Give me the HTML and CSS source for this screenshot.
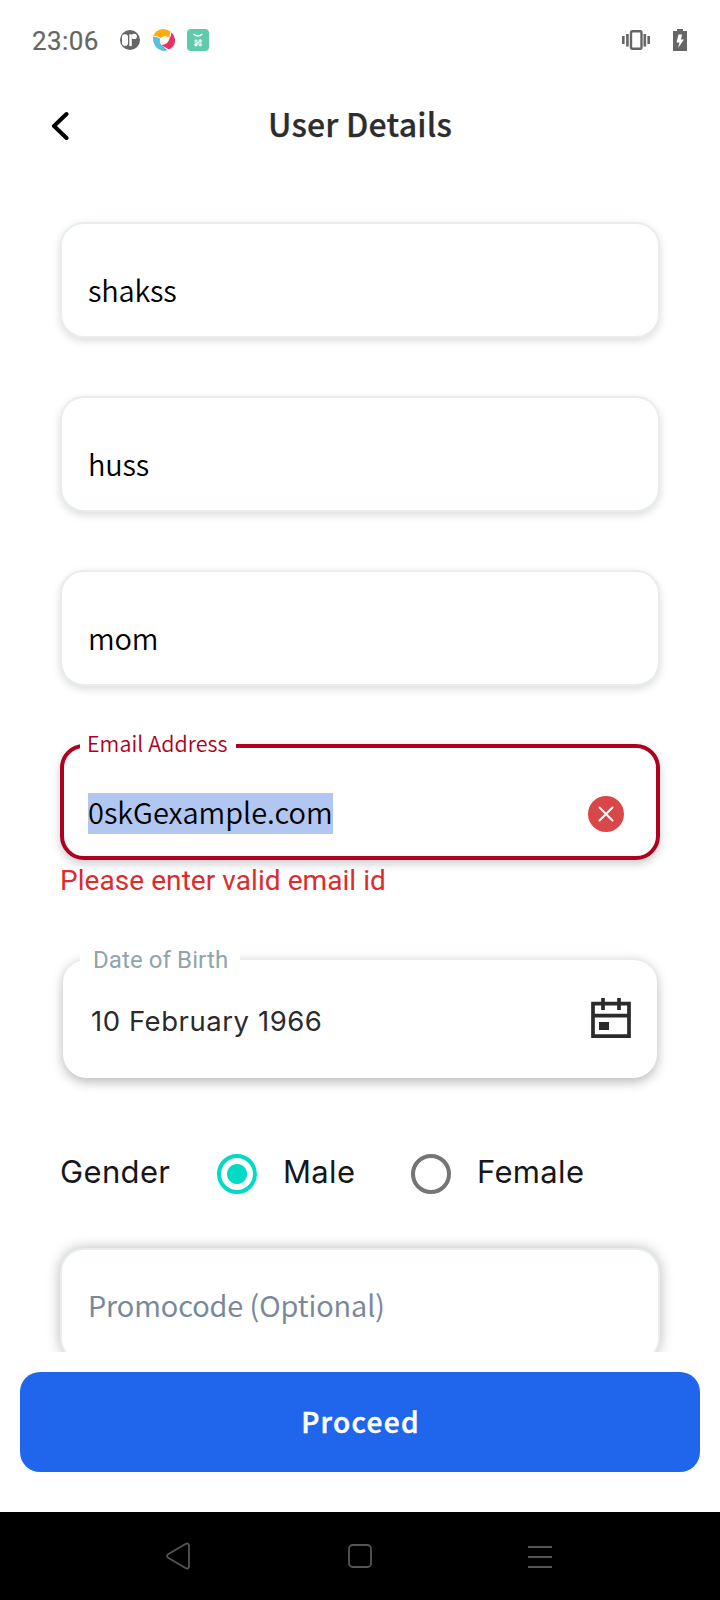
FILE: index.html
```html
<!DOCTYPE html>
<html lang="en">
<head>
<meta charset="utf-8">
<title>User Details</title>
<link rel="stylesheet" href="styles.css">
</head>
<body>
<div class="screen">
  <div class="status">
    <span class="clock">23:06</span>
    <svg class="ico-p" width="20" height="20" viewBox="0 0 20 20"><circle cx="10" cy="10" r="10" fill="#666"/><rect x="2" y="4.300" width="6" height="11.400" rx="2.800" fill="#fff"/><path d="M9.300 4.300h2.500v11.800H9.300z" fill="#fff"/><circle cx="14.200" cy="6.400" r="2.700" fill="#fff"/></svg>
    <svg class="ico-swirl" width="22" height="22" viewBox="0 0 22 22"><path d="M.2 6.800Q3.500 0 10.500 0q4 0 7 2.500l-1.200 6.200Q12.500 5 7.500 9.300 5 6.500.2 6.800z" fill="#fdae0c"/><path d="M18.300 3.300Q22.500 7 22 12.500q-.8 5.500-6 8L8 16q7 .2 8.500-6.500 2-3 1.800-6.200z" fill="#e92f63"/><path d="M0 7.800q4-.8 7.200 2.200-1.500 5 3.600 7.700l3.700 3.800Q8 23 3.500 18.500-.4 14.500 0 7.800z" fill="#5bc0dc"/></svg>
    <svg class="ico-bag" width="22" height="22" viewBox="0 0 22 22"><rect width="22" height="22" rx="4" fill="#5fcbaa"/><path d="M6.500 5q4.500 4 9 0" fill="none" stroke="#fff" stroke-width="1.400"/><g fill="#fff"><circle cx="9" cy="12" r="1.700" opacity=".7"/><circle cx="13.200" cy="12" r="1.700"/><circle cx="9" cy="15.700" r="1.700"/><circle cx="13.200" cy="15.700" r="1.700" opacity=".8"/><circle cx="11" cy="13.800" r="1"/></g></svg>
    <span class="spacer"></span>
    <svg class="ico-vib" width="28" height="20" viewBox="0 0 28 20" fill="#666"><rect x="9" y="1.200" width="10.500" height="17.600" rx="1.500" fill="none" stroke="#666" stroke-width="2.400"/><rect y="6" width="2.600" height="8"/><rect x="4.100" y="4" width="2.600" height="12.500"/><rect x="21.500" y="4" width="2.600" height="12.500"/><rect x="25.400" y="6" width="2.600" height="8"/></svg>
    <svg class="ico-bat" width="14" height="22" viewBox="0 0 14 22"><path d="M4 0h6v2h4v20H0V2h4z" fill="#666"/><path d="M9 5.500H5.500L3.500 13.500h3L5 19l6-8.500H8z" fill="#fff"/></svg>
  </div>

  <div class="header">
    <svg class="back" width="18" height="30" viewBox="0 0 18 30"><path d="M15.500 3L3 15l12.500 12" fill="none" stroke="#000" stroke-width="4" stroke-linecap="round" stroke-linejoin="round"/></svg>
    <h1 class="title">User Details</h1>
  </div>

  <div class="form">
    <div class="field"><span class="value name">shakss</span></div>
    <div class="field"><span class="value name">huss</span></div>
    <div class="field"><span class="value name">mom</span></div>
    <div class="field error">
      <span class="label">Email Address</span>
      <span class="value selected">0skGexample.com</span>
      <svg class="clear" width="36" height="36" viewBox="0 0 36 36"><circle cx="18" cy="18" r="18" fill="#d94848"/><path d="M11.500 11.500l13 13m0-13l-13 13" stroke="#fff" stroke-width="2" stroke-linecap="round"/></svg>
    </div>
    <div class="message">Please enter valid email id</div>
    <div class="dob">
      <span class="dob-label">Date of Birth</span>
      <span class="date">10 February 1966</span>
      <svg class="calendar" width="40" height="40" viewBox="0 0 40 40"><path d="M2 5.700h36V38.200H2zM2 17.700h36M12 0v12M28 0v12" fill="none" stroke="#2b2b2b" stroke-width="3.700"/><rect x="8" y="24" width="10" height="8" fill="#2b2b2b"/></svg>
    </div>
    <div class="gender">
      <span class="g0">Gender</span>
      <span class="radio on"></span><span class="g1">Male</span>
      <span class="radio"></span><span class="g2">Female</span>
    </div>
    <div class="promo"><span class="placeholder">Promocode (Optional)</span></div>
  </div>

  <div class="action"><button class="proceed">Proceed</button></div>

  <div class="nav">
    <svg width="26" height="28" viewBox="0 0 26 28"><path d="M20.500 2q3-1.500 3.500 1.500v21q-.5 3-3.500 1.500L3.500 16q-3-2 0-4z" fill="none" stroke="#555" stroke-width="1.800"/></svg>
    <svg width="24" height="24" viewBox="0 0 24 24"><rect x="1" y="1" width="22" height="22" rx="3.500" fill="none" stroke="#555" stroke-width="1.800"/></svg>
    <svg class="menu" width="24" height="22" viewBox="0 0 24 22"><path d="M0 1h24M0 11h24M0 21h24" stroke="#555" stroke-width="2"/></svg>
  </div>
</div>
</body>
</html>
```
FILE: styles.css
```css
* { box-sizing: border-box; }
body { margin: 0; background: #fff; }
.screen {
  width: 720px; height: 1600px; overflow: hidden;
  display: flex; flex-direction: column; background: #fff;
  font-family: "Noto Sans CJK SC", "Noto Sans", sans-serif;
}
.screen span { white-space: nowrap; }
.status { height: 80px; display: flex; align-items: center; padding: 0 33px 0 32px; flex: none; }
.clock { font: 400 26px/30px Roboto, sans-serif; color: #666; width: 88px; letter-spacing: .4px; padding-top: 2px; -webkit-text-stroke: .2px #666; }
.ico-swirl { margin-left: 13px; }
.ico-bag { margin-left: 12px; }
.spacer { flex: 1; }
.ico-bat { margin-left: 23px; }

.header { position: relative; height: 92px; flex: none; text-align: center; }
.back { position: absolute; left: 51px; top: 31px; }
.title { margin: 0; padding-top: 23px; font-size: 32px; line-height: 40px; font-weight: 500; color: #2d2d2d; letter-spacing: .2px; -webkit-text-stroke: .25px #2d2d2d; }

.form { height: 1180px; flex: none; padding: 50px 60px 0; overflow: hidden; }
.field {
  position: relative; height: 116px; margin-bottom: 58px;
  border: 2px solid #e8eded; border-radius: 24px; background: #fff;
  padding: 47px 0 0 26px; box-shadow: 0 3px 9px rgba(0,0,0,.14);
}
.value { display: inline-block; font-size: 29px; font-weight: 350; line-height: 36px; padding-bottom: 5px; color: #000; vertical-align: top; }
.name { letter-spacing: -.2px; }
.field.error { border: 4px solid #b00020; margin-bottom: 0; padding: 45px 0 0 24px; box-shadow: 0 4px 10px rgba(0,0,0,.2); }
.selected { background: #b1c7f1; }
.label {
  position: absolute; left: 16px; top: -19px; width: 156px; padding-left: 7px;
  font-size: 21.5px; font-weight: 350; line-height: 28px; color: #b00020; background: #fff; letter-spacing: .05px;
}
.clear { position: absolute; left: 524px; top: 48px; }
.message { height: 98px; padding-top: 5px; font: 400 28px/32px Roboto, sans-serif; color: #dd2c2c; letter-spacing: .06px; }
.dob {
  position: relative; height: 120px; margin: 0 3px; border-top: 2px solid #e8eded;
  border-radius: 24px; background: #fff; box-shadow: 0 4px 12px rgba(0,0,0,.28);
  padding: 43px 26px 0 28px; display: flex; justify-content: space-between; align-items: flex-start;
  font-family: Inter, sans-serif;
}
.dob-label {
  position: absolute; left: 17px; top: -16px; width: 160px; padding-left: 13px;
  font: 400 24px/32px Roboto, sans-serif; color: #90a4ae; background: #fff; letter-spacing: .1px;
}
.date { font-size: 27.5px; font-weight: 400; line-height: 36px; color: #2b2b2b; letter-spacing: .55px; }
.calendar { margin-top: -5px; }
.gender {
  display: flex; align-items: center; height: 40px; margin: 76px 0 54px;
  font: 400 31px/40px Inter, sans-serif; color: #15171c; letter-spacing: .35px;
}
.g0 { width: 157px; margin-top: -4px; }
.g1 { width: 128px; margin: -4px 0 0 26px; }
.g2 { margin: -4px 0 0 26px; }
.radio { flex: none; width: 40px; height: 40px; border: 4px solid #757575; border-radius: 50%; }
.on { border-color: #03dac5; background: radial-gradient(circle, #03dac5 9.5px, transparent 10.5px); }
.promo {
  height: 114px; border: 2px solid #e8eded; border-radius: 24px; background: #fff;
  padding: 34px 0 0 26px; box-shadow: 0 0 14px rgba(0,0,0,.28);
}
.placeholder { display: block; font-size: 29px; font-weight: 350; line-height: 40px; color: #778899; letter-spacing: -.05px; -webkit-text-stroke: .2px #778899; }

.action { height: 160px; flex: none; padding: 20px 20px 0; }
.proceed {
  display: block; width: 680px; height: 100px; border: 0; border-radius: 20px; padding: 0 0 3px 1px;
  background: #1f66ec; color: #fff; font: 500 28px/40px "Noto Sans CJK SC", sans-serif; letter-spacing: 1.3px;
  -webkit-text-stroke: .5px #fff;
}
.nav { height: 88px; flex: none; background: #000; display: flex; align-items: center; justify-content: space-between; padding: 0 168px 0 165px; }
.menu { margin-top: 2px; }
```
